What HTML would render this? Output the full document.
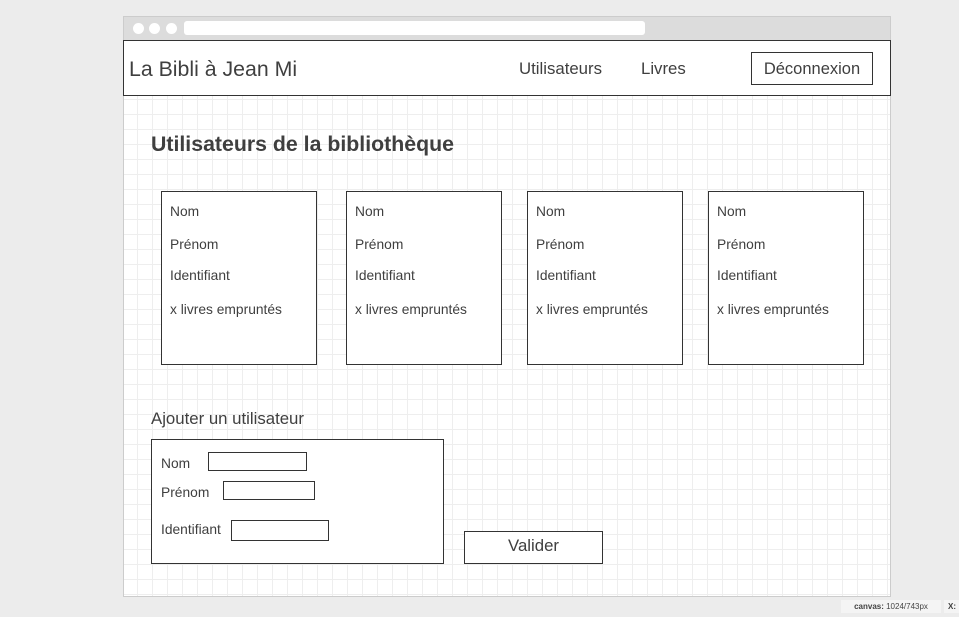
<!DOCTYPE html>
<html><head><meta charset="utf-8"><style>
*{margin:0;padding:0;box-sizing:border-box}
body{width:959px;height:617px;background:#ececec;position:relative;overflow:hidden;font-family:"Liberation Sans",sans-serif;color:#3f3f3f}
.a{position:absolute}
.win{left:123px;top:16px;width:768px;height:581px;border:1px solid #ccc;background-color:#fff;
background-image:linear-gradient(#eeeeee 1px,transparent 1px),linear-gradient(90deg,#eeeeee 1px,transparent 1px);
background-size:15px 15px;background-position:13px 7px}
.bar{left:124px;top:17px;width:766px;height:23px;background:#dcdcdc}
.dot{width:11px;height:11px;border-radius:50%;background:#fff;top:23px}
.url{left:184px;top:21px;width:461px;height:14px;background:#fff;border-radius:3px}
.nav{left:123px;top:40px;width:768px;height:56px;border:1px solid #333;background:#fff}
.box{border:1px solid #333;background:#fff}
.card{top:191px;width:156px;height:174px}
.card div{position:absolute;left:8px;font-size:13.8px}
.in{border:1px solid #333;background:#fff;height:19px}
.sm{font-size:13.8px}
</style></head><body>
<div class="a win"></div>
<div class="a bar"></div>
<div class="a dot" style="left:133px"></div>
<div class="a dot" style="left:149px"></div>
<div class="a dot" style="left:166px"></div>
<div class="a url"></div>
<div class="a nav"></div>
<div class="a" style="left:129px;top:57px;font-size:21.3px">La Bibli à Jean Mi</div>
<div class="a" style="left:519px;top:59px;font-size:16.8px">Utilisateurs</div>
<div class="a" style="left:641px;top:59px;font-size:16.8px">Livres</div>
<div class="a box" style="left:751px;top:52px;width:122px;height:33px;font-size:16.5px;text-align:center;line-height:33px">Déconnexion</div>
<div class="a" style="left:151px;top:132px;font-size:21.3px;font-weight:bold">Utilisateurs de la bibliothèque</div>

<div class="a box card" style="left:161px"><div style="top:12px">Nom</div><div style="top:45px">Prénom</div><div style="top:76px">Identifiant</div><div style="top:110px">x livres empruntés</div></div>
<div class="a box card" style="left:346px"><div style="top:12px">Nom</div><div style="top:45px">Prénom</div><div style="top:76px">Identifiant</div><div style="top:110px">x livres empruntés</div></div>
<div class="a box card" style="left:527px"><div style="top:12px">Nom</div><div style="top:45px">Prénom</div><div style="top:76px">Identifiant</div><div style="top:110px">x livres empruntés</div></div>
<div class="a box card" style="left:708px"><div style="top:12px">Nom</div><div style="top:45px">Prénom</div><div style="top:76px">Identifiant</div><div style="top:110px">x livres empruntés</div></div>

<div class="a" style="left:151px;top:409px;font-size:16.8px">Ajouter un utilisateur</div>
<div class="a box" style="left:151px;top:439px;width:293px;height:125px"></div>
<div class="a sm" style="left:161px;top:456px">Nom</div>
<div class="a in" style="left:208px;top:452px;width:99px"></div>
<div class="a sm" style="left:161px;top:485px">Prénom</div>
<div class="a in" style="left:223px;top:481px;width:92px"></div>
<div class="a sm" style="left:161px;top:522px">Identifiant</div>
<div class="a in" style="left:231px;top:520px;width:98px;height:21px"></div>
<div class="a box" style="left:464px;top:531px;width:139px;height:33px;font-size:16.8px;text-align:center;line-height:28px">Valider</div>

<div class="a" style="left:841px;top:600px;width:100px;height:13px;background:#f4f4f4;font-size:8px;line-height:13px;text-align:center;color:#444"><b>canvas:</b> 1024/743px</div>
<div class="a" style="left:944px;top:600px;width:15px;height:13px;background:#f4f4f4;font-size:8px;line-height:13px;padding-left:4px"><b>X:</b></div>
</body></html>
